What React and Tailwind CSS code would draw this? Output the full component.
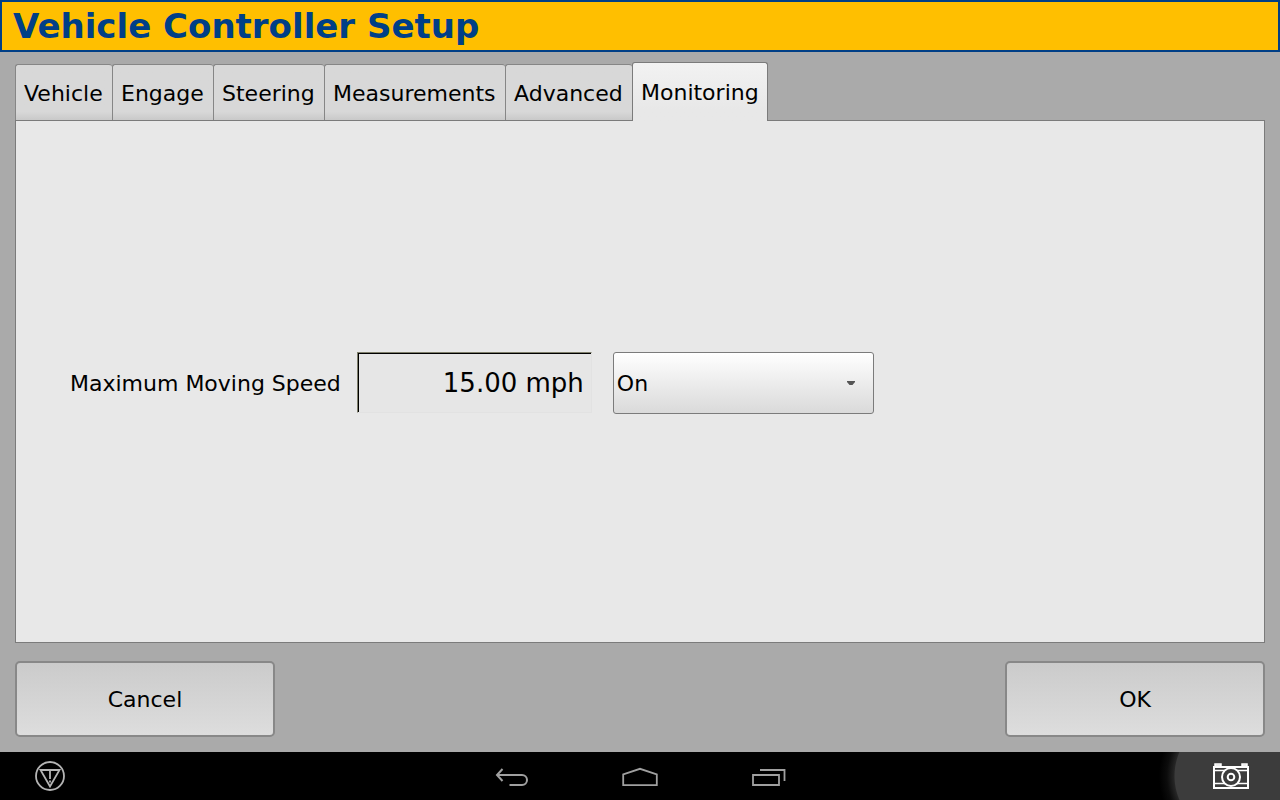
import React, { useState } from 'react';

const tabs = [
  { label: 'Vehicle', width: 'min-w-[97px]' },
  { label: 'Engage', width: 'min-w-[101px]' },
  { label: 'Steering', width: 'min-w-[111px]' },
  { label: 'Measurements', width: 'min-w-[181px]' },
  { label: 'Advanced', width: 'min-w-[127px]' },
  { label: 'Monitoring', width: 'min-w-[136px]' },
];

const Tab = ({ label, width, selected, onSelect }) => (
  <button
    type="button"
    role="tab"
    aria-selected={selected}
    onClick={onSelect}
    className={`${width} px-2 text-left rounded-t-[3px] ${
      selected
        ? 'h-[59px] pt-px border border-b-0 border-[#7b7b7b] bg-linear-to-b from-[#f2f2f2] to-[#e8e8e8] to-80%'
        : 'h-14 pt-[3px] mb-px border-t border-l border-[#868686] bg-linear-to-b from-[#d8d8d8] from-85% to-[#c9c9c9]'
    }`}
  >
    {label}
  </button>
);

const DialogButton = ({ children }) => (
  <button
    type="button"
    className="w-[260px] h-[76px] pt-0.5 rounded-[5px] border-2 border-[#888888] bg-linear-to-b from-[#cbcbcb] to-[#dddddd]"
  >
    {children}
  </button>
);

const WarningIcon = () => (
  <svg width="32" height="32" viewBox="0 0 32 32" fill="none" stroke="#b4b4b4">
    <circle cx="16" cy="16" r="14" strokeWidth="1.8" />
    <path d="M6.5 10h19L16 26.5z" strokeWidth="1.8" />
    <path d="M16 11v8M16 20.5v2" strokeWidth="1.8" />
  </svg>
);

const BackIcon = () => (
  <svg width="36" height="24" viewBox="0 0 36 24" fill="none" stroke="#a0a0a0" strokeWidth="2">
    <path d="M4 10h25a5 5 0 0 1 0 10H16.5" />
    <path d="M9.5 4L4 10l5.5 6" />
  </svg>
);

const HomeIcon = () => (
  <svg width="36" height="24" viewBox="0 0 36 24" fill="none" stroke="#a0a0a0" strokeWidth="1.8">
    <path d="M1.2 20.2V9.3L18 3.8l16.8 5.5v10.9z" />
  </svg>
);

const RecentIcon = () => (
  <svg width="36" height="24" viewBox="0 0 36 24" fill="none" stroke="#a0a0a0" strokeWidth="1.8">
    <path d="M2 10h26v10H2z" />
    <path d="M9 5h24.5v11" />
  </svg>
);

const CameraIcon = () => (
  <svg width="36" height="28" viewBox="0 0 36 28" fill="none" stroke="#ffffff">
    <path d="M1 5h34v21H1z" strokeWidth="2" />
    <path d="M2 2h6v2H2zM29 2h5v2h-5z" fill="#bdbdbd" strokeWidth="1.5" />
    <path d="M1 8.5h34M1 21.5h34" strokeWidth="1.5" />
    <circle cx="18" cy="15" r="9" fill="#3c3c3c" strokeWidth="2" />
    <circle cx="18" cy="15" r="3.3" strokeWidth="2" />
  </svg>
);

const NavBar = () => (
  <nav className="grid grid-cols-[1fr_auto_1fr] items-center h-12 bg-black">
    <button type="button" aria-label="Warnings" className="justify-self-start ml-[34px]">
      <WarningIcon />
    </button>
    <div className="flex gap-[93px] pt-0.5">
      <button type="button" aria-label="Back">
        <BackIcon />
      </button>
      <button type="button" aria-label="Home">
        <HomeIcon />
      </button>
      <button type="button" aria-label="Recent apps">
        <RecentIcon />
      </button>
    </div>
    <button
      type="button"
      aria-label="Screenshot"
      className="justify-self-end flex items-center justify-end w-[125px] h-12 pr-[31px] bg-[radial-gradient(circle_at_80px_24px,#3c3c3c_60px,#262626_61px,#0c0c0c_68px,#000000_76px)]"
    >
      <CameraIcon />
    </button>
  </nav>
);

const App = () => {
  const [active, setActive] = useState('Monitoring');
  const [mode, setMode] = useState('On');
  const [speed, setSpeed] = useState('15.00 mph');

  return (
    <div className="min-h-screen flex flex-col bg-[#aaaaaa] text-black text-[22px] leading-7 font-['DejaVu_Sans',sans-serif]">
      <header className="h-[52px] px-[11px] flex items-center border-2 border-[#003f87] bg-[#ffbf00]">
        <h1 className="text-[34px] leading-10 font-bold text-[#003f87]">Vehicle Controller Setup</h1>
      </header>

      <main className="flex-1 flex flex-col px-[15px] pt-[10px] pb-[15px]">
        <div role="tablist" className="flex items-end -mb-px z-10">
          {tabs.map((tab) => (
            <Tab
              key={tab.label}
              label={tab.label}
              width={tab.width}
              selected={tab.label === active}
              onSelect={() => setActive(tab.label)}
            />
          ))}
        </div>

        <section className="flex-1 flex items-center pl-[54px] pt-0.5 border border-[#7b7b7b] bg-[#e8e8e8]">
          <label htmlFor="max-speed" className="mr-4 pt-0.5">
            Maximum Moving Speed
          </label>
          <input
            id="max-speed"
            value={speed}
            onChange={(e) => setSpeed(e.target.value)}
            className="w-[235px] h-[61px] pr-[7px] text-right text-[26px] border border-t-[#7f7f6b] border-l-[#7f7f6b] border-r-[#e2e2e2] border-b-[#e2e2e2] bg-[#e6e6e6] shadow-[inset_1px_1px_0_#000000]"
          />
          <div className="relative ml-[21px]">
            <select
              aria-label="Maximum moving speed monitoring"
              value={mode}
              onChange={(e) => setMode(e.target.value)}
              className="block appearance-none w-[261px] h-[62px] pl-[3px] pt-0.5 rounded-[3px] border border-[#7b7b7b] bg-linear-to-b from-white to-[#dadada]"
            >
              <option>On</option>
              <option>Off</option>
            </select>
            <svg
              width="8"
              height="4"
              viewBox="0 0 8 4"
              className="absolute right-[19px] top-[29px] pointer-events-none"
            >
              <path d="M0 0h8v1L5.5 4h-3L0 1z" fill="#555555" />
            </svg>
          </div>
        </section>

        <div className="flex justify-between mt-[18px]">
          <DialogButton>Cancel</DialogButton>
          <DialogButton>OK</DialogButton>
        </div>
      </main>

      <NavBar />
    </div>
  );
};

export default App;
